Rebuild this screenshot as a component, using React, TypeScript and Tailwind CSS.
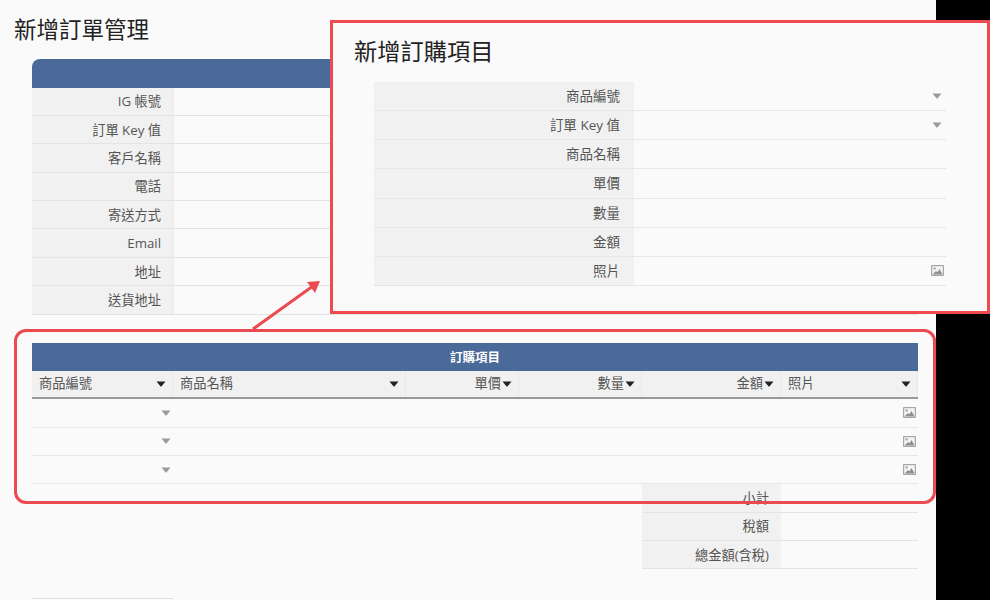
import React from 'react';

const FONT = { fontFamily: '"Open Sans", "Noto Sans CJK TC", sans-serif' };

const customerRows = ['IG 帳號', '訂單 Key 值', '客戶名稱', '電話', '寄送方式', 'Email', '地址', '送貨地址'];

const itemRows = [
    { label: '商品編號', icon: 'caret' },
    { label: '訂單 Key 值', icon: 'caret' },
    { label: '商品名稱' },
    { label: '單價' },
    { label: '數量' },
    { label: '金額' },
    { label: '照片', icon: 'image' },
];

const columns = [
    { label: '商品編號', width: 'w-[141px]', right: false },
    { label: '商品名稱', width: 'w-[233px]', right: false },
    { label: '單價', width: 'w-[113px]', right: true },
    { label: '數量', width: 'w-[123px]', right: true },
    { label: '金額', width: 'w-[139px]', right: true },
    { label: '照片', width: 'flex-1', right: false },
];

const Caret = () => (
    <svg width="10" height="6" viewBox="0 0 10 6" className="shrink-0">
        <path d="M0.5 0.5 H9.5 L5.6 5.2 Q5 5.8 4.4 5.2 Z" fill="#9a9a9a" />
    </svg>
);

const SortCaret = () => (
    <svg width="10" height="6" viewBox="0 0 10 6" className="shrink-0">
        <path d="M0.5 0.5 H9.5 L5.6 5.2 Q5 5.8 4.4 5.2 Z" fill="#222222" />
    </svg>
);

const ImageIcon = () => (
    <svg width="13" height="11" viewBox="0 0 13 11" className="shrink-0">
        <rect x="0" y="0" width="13" height="11" rx="1" fill="#a6a6a6" />
        <rect x="1.2" y="1.2" width="10.6" height="8.6" fill="#f4f4f4" />
        <circle cx="3.6" cy="3.4" r="1.2" fill="#a6a6a6" />
        <path d="M1.5 9.6 L5 6 L6.5 7.2 L8.5 4 L11.6 9.6 Z" fill="#8f8f8f" />
    </svg>
);

const GridRow = ({ label }: { label: string }) => (
    <div className="flex h-[28.4px] border-b border-[#e4e4e4]">
        <div className="flex w-[142px] items-center justify-end border-r border-[#eaeaea] bg-[#f1f1f1] pr-3 pt-[2px] text-[13.25px] text-[#555555]">
            {label}
        </div>
        <div className="flex-1" />
    </div>
);

const App = () => {
    return (
        <div style={FONT} className="relative flex h-[600px] w-[990px] overflow-hidden bg-black">
            <div className="w-[936px] shrink-0 bg-[#fafafa]">
                <h1 className="pl-[14px] pt-[15px] text-[22.5px] leading-[30px] text-[#222222]">新增訂單管理</h1>

                <div className="ml-[32px] mt-[14px] w-[886px]">
                    <div className="h-[28.5px] rounded-t-lg bg-[#4a6a9a]" />
                    {customerRows.map((label) => (
                        <GridRow key={label} label={label} />
                    ))}
                </div>

                <div className="ml-[32px] mt-[28.5px] w-[886px]">
                    <div className="flex h-[28px] items-center justify-center pt-[2px] bg-[#4a6a9a] text-[12.5px] font-bold text-white">
                        訂購項目
                    </div>
                    <div className="flex h-[28px] border-b-2 border-[#999999] bg-[#f1f1f1]">
                        {columns.map((col) => (
                            <div
                                key={col.label}
                                className={`${col.width} flex items-center gap-px border-r border-[#e8e8e8] text-[13.25px] text-[#555555] ${col.right ? 'justify-end pr-[6px]' : 'justify-between pl-[7px] pr-[6px]'}`}
                            >
                                <span>{col.label}</span>
                                <SortCaret />
                            </div>
                        ))}
                    </div>
                    {[0, 1, 2].map((row) => (
                        <div key={row} className="flex h-[28.4px] items-center justify-between border-b border-[#e6e6e6] pr-[2px]">
                            <div className="flex w-[139px] justify-end">
                                <Caret />
                            </div>
                            <ImageIcon />
                        </div>
                    ))}
                    <div className="ml-[610px]">
                        {['小計', '稅額', '總金額(含稅)'].map((label) => (
                            <div key={label} className="flex h-[28.4px] border-b border-[#e4e4e4]">
                                <div className="flex w-[139px] items-center justify-end bg-[#f1f1f1] pr-3 pt-[2px] text-[13.25px] text-[#555555]">
                                    {label}
                                </div>
                                <div className="flex-1" />
                            </div>
                        ))}
                    </div>
                </div>

                <div className="ml-[32px] mt-[29px] h-px w-[141px] bg-[#dddddd]" />
            </div>

            {/* annotations */}
            <div className="absolute left-[14px] top-[329px] h-[175px] w-[922px] rounded-xl border-[3px] border-[#ea4a50]" />

            <svg className="absolute left-[245px] top-[275px]" width="85" height="60" viewBox="0 0 85 60">
                <path d="M8 54 L68 11" stroke="#ea4a50" strokeWidth="3" fill="none" />
                <path d="M75 6 L70 18 L62 7 Z" fill="#ea4a50" />
            </svg>

            <div className="absolute left-[330px] top-[20px] h-[294px] w-[660px] border-[3px] border-[#ef4a50] bg-[#fafafa]">
                <h2 className="pl-[21px] pt-[12px] text-[23.25px] leading-[32px] text-[#222222]">新增訂購項目</h2>
                <div className="ml-[41px] mt-[15px] w-[572px]">
                    {itemRows.map((row) => (
                        <div key={row.label} className="flex h-[29.15px] border-b border-[#e6e6e6]">
                            <div className="flex w-[260px] items-center justify-end bg-[#f1f1f1] pr-[14px] text-[13.5px] text-[#555555]">
                                {row.label}
                            </div>
                            <div className="flex flex-1 items-center justify-end pr-[2px]">
                                {row.icon === 'caret' && (
                                    <span className="pr-[2px]">
                                        <Caret />
                                    </span>
                                )}
                                {row.icon === 'image' && <ImageIcon />}
                            </div>
                        </div>
                    ))}
                </div>
            </div>
        </div>
    );
};

export default App;
